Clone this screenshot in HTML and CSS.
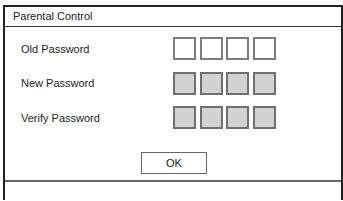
FILE: index.html
```html
<!DOCTYPE html>
<html>
<head>
  <meta charset="utf-8">
  <title>Parental Control</title>
  <link rel="stylesheet" href="styles.css">
</head>

<body>
  <div class="dialog">
    <div class="dialog-title">Parental Control</div>

    <div class="dialog-body">
      <div class="field">
        <span class="field-label">Old Password</span>
        <div class="pin">
          <span class="pin-box"></span>
          <span class="pin-box"></span>
          <span class="pin-box"></span>
          <span class="pin-box"></span>
        </div>
      </div>

      <div class="field">
        <span class="field-label">New Password</span>
        <div class="pin">
          <span class="pin-box disabled"></span>
          <span class="pin-box disabled"></span>
          <span class="pin-box disabled"></span>
          <span class="pin-box disabled"></span>
        </div>
      </div>

      <div class="field">
        <span class="field-label">Verify Password</span>
        <div class="pin">
          <span class="pin-box disabled"></span>
          <span class="pin-box disabled"></span>
          <span class="pin-box disabled"></span>
          <span class="pin-box disabled"></span>
        </div>
      </div>

      <div class="actions">
        <button type="button" class="ok-btn">OK</button>
      </div>
    </div>

    <div class="dialog-status"></div>
  </div>
</body>
</html>
```

FILE: styles.css
```css
body {
  margin: 0;
  background-color: white;
  font-family: "Liberation Sans", Arial, sans-serif;
  font-size: 11px;
  color: #222;
}

.dialog {
  margin: 5px 0 0 3px;
  width: 340px;
  box-sizing: border-box;
  border: 2px solid #222;
  border-bottom: none;
}

.dialog-title {
  height: 19px;
  line-height: 19px;
  padding-left: 8px;
  border-bottom: 1px solid #333;
}

.dialog-body {
  display: flex;
  flex-direction: column;
  gap: 11.5px;
  padding: 10px 0 6px 16px;
}

.field {
  display: flex;
  align-items: center;
  height: 23px;
}

.field-label {
  width: 152px;
}

.pin {
  display: flex;
  gap: 3.5px;
}

.pin-box {
  width: 23px;
  height: 23px;
  box-sizing: border-box;
  border: 2px solid #7d7d7d;
  background-color: white;
}

.pin-box.disabled {
  background-color: #d2d2d2;
  border-color: #6f6f6f;
}

.actions {
  display: flex;
  margin-top: 11.5px;
  padding-left: 120px;
}

.ok-btn {
  width: 66px;
  height: 22px;
  border: 1px solid #666;
  border-radius: 0;
  background-color: white;
  font-family: inherit;
  font-size: 11px;
  color: #222;
  padding: 0;
}

.dialog-status {
  height: 18px;
  border-top: 2px solid #666;
}
```
